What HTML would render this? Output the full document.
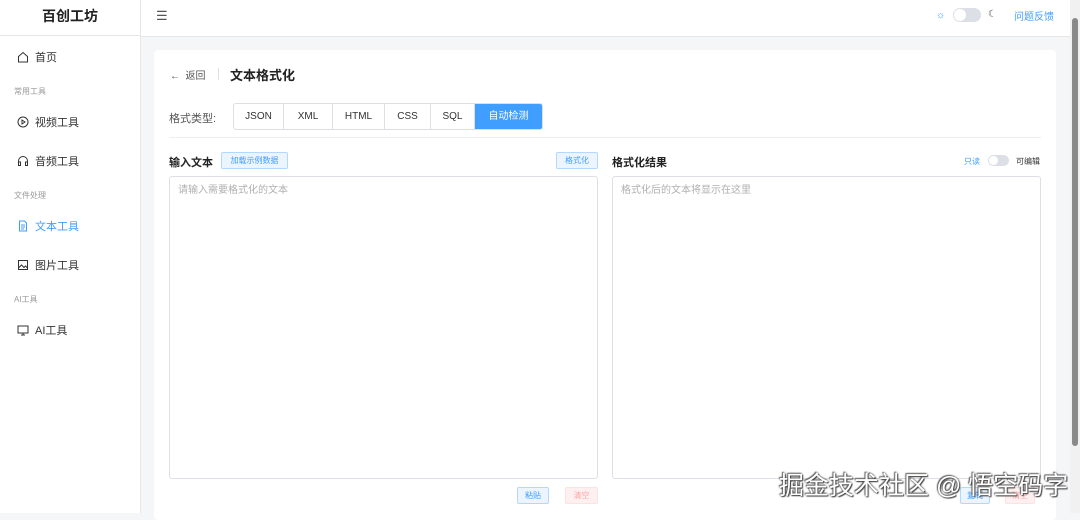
<!DOCTYPE html>
<html><head><meta charset="utf-8"><style>
*{box-sizing:border-box;margin:0;padding:0}
body{width:1080px;height:513px;overflow:hidden;font-family:"Liberation Sans","Noto Sans CJK SC",sans-serif;background:#f5f6f8;position:relative;color:#333}
.side{position:absolute;left:0;top:0;width:141px;height:513px;background:#fff;border-right:1px solid #e6e6e6}
.logo{height:36px;line-height:32px;text-align:center;font-size:14px;font-weight:bold;color:#222;border-bottom:1px solid #e6e6e6}
.mi{position:absolute;left:17px;font-size:11px;color:#333;display:flex;align-items:center;gap:6px}
.grp{position:absolute;left:14px;font-size:8px;color:#999}
.hdr{position:absolute;left:141px;top:0;right:10px;height:37px;background:#fff;border-bottom:1px solid #e6e6e6}
.card{position:absolute;left:154px;top:50px;width:902px;height:470px;background:#fff;border-radius:4px}
.abs{position:absolute}
.seg{position:absolute;left:233px;top:103px;height:27px;display:flex;border:1px solid #dcdfe6;border-radius:3px;overflow:hidden;background:#fff}
.seg div{font-size:10px;color:#333;line-height:25px;text-align:center;border-right:1px solid #dcdfe6}
.seg .on{background:#409eff;color:#fff;border:none}
.ta{position:absolute;top:176px;height:303px;border:1px solid #dcdfe6;border-radius:3px;font-size:10px;color:#b0b0b0;padding:4px 8px}
.btn{position:absolute;font-size:8px;border-radius:2px;text-align:center;line-height:15px;height:17px}
.b{background:#ecf5ff;border:1px solid #b3d8ff;color:#409eff}
.r{background:#fef0f0;border:1px solid #fde2e2;color:#f9a7a7}
.sw{position:absolute;border-radius:10px;background:#dcdfe6}
.sw i{position:absolute;left:1px;top:1px;border-radius:50%;background:#fff}
</style></head><body>
<div class="side">
<div class="logo">百创工坊</div>
<div class="mi" style="top:49px"><svg width="12" height="12" viewBox="0 0 12 12"><path d="M1.5 5.5L6 1.5l4.5 4V11h-9z" fill="none" stroke="#333" stroke-width="1"/></svg>首页</div>
<div class="grp" style="top:86px">常用工具</div>
<div class="mi" style="top:114px"><svg width="12" height="12" viewBox="0 0 12 12"><circle cx="6" cy="6" r="5" fill="none" stroke="#333"/><path d="M5 4v4l3-2z" fill="none" stroke="#333"/></svg>视频工具</div>
<div class="mi" style="top:153px"><svg width="12" height="12" viewBox="0 0 12 12"><path d="M1.5 9V6a4.5 4.5 0 019 0v3" fill="none" stroke="#333"/><rect x="1.5" y="7" width="2" height="3.5" fill="none" stroke="#333"/><rect x="8.5" y="7" width="2" height="3.5" fill="none" stroke="#333"/></svg>音频工具</div>
<div class="grp" style="top:190px">文件处理</div>
<div class="mi" style="top:218px;color:#409eff"><svg width="12" height="12" viewBox="0 0 12 12"><path d="M2.5 1h5l2 2v8h-7z M4 5h4M4 7h4M4 9h3" fill="none" stroke="#409eff"/></svg>文本工具</div>
<div class="mi" style="top:257px"><svg width="12" height="12" viewBox="0 0 12 12"><rect x="1.5" y="1.5" width="9" height="9" fill="none" stroke="#333"/><path d="M1.5 9l3-3 2.5 2.5 1.5-1.5 2 2" fill="none" stroke="#333"/></svg>图片工具</div>
<div class="grp" style="top:294px">AI工具</div>
<div class="mi" style="top:322px"><svg width="12" height="12" viewBox="0 0 12 12"><rect x="1" y="2" width="10" height="7" fill="none" stroke="#333"/><path d="M4 11h4M6 9v2" stroke="#333"/></svg>AI工具</div>
</div>
<div class="hdr">
<div class="abs" style="left:15px;top:8px;font-size:13px;color:#555">☰</div>
<div class="abs" style="left:795px;top:10px;font-size:10px;color:#409eff">☼</div>
<div class="sw" style="left:812px;top:8px;width:28px;height:14px"><i style="width:12px;height:12px"></i></div>
<div class="abs" style="left:847px;top:9px;font-size:10px;color:#555">☾</div>
<div class="abs" style="left:873px;top:8px;font-size:10px;color:#409eff">问题反馈</div>
</div>
<div class="abs" style="left:1070px;top:0;width:10px;height:513px;background:#f1f1f1"></div>
<div class="abs" style="left:1072px;top:18px;width:6px;height:428px;background:#8a8a8a;border-radius:3px"></div>
<div class="card"></div>
<div class="abs" style="left:170px;top:67px;font-size:10px;color:#555">←&nbsp; 返回</div>
<div class="abs" style="left:218px;top:68px;width:1px;height:12px;background:#e0e0e0"></div>
<div class="abs" style="left:230px;top:65px;font-size:13px;font-weight:bold;color:#222">文本格式化</div>
<div class="abs" style="left:169px;top:110px;font-size:11px;color:#555">格式类型:</div>
<div class="seg"><div style="width:50px">JSON</div><div style="width:49px">XML</div><div style="width:52px">HTML</div><div style="width:46px">CSS</div><div style="width:44px">SQL</div><div class="on" style="width:67px">自动检测</div></div>
<div class="abs" style="left:169px;top:137px;width:872px;height:1px;background:#ebeef5"></div>
<div class="abs" style="left:169px;top:154px;font-size:11px;font-weight:bold;color:#222">输入文本</div>
<div class="btn b" style="left:221px;top:152px;width:67px">加载示例数据</div>
<div class="btn b" style="left:556px;top:152px;width:42px">格式化</div>
<div class="abs" style="left:612px;top:154px;font-size:11px;font-weight:bold;color:#222">格式化结果</div>
<div class="abs" style="left:964px;top:156px;font-size:8px;color:#409eff">只读</div>
<div class="sw" style="left:988px;top:155px;width:21px;height:11px"><i style="width:9px;height:9px"></i></div>
<div class="abs" style="left:1016px;top:156px;font-size:8px;color:#333">可编辑</div>
<div class="ta" style="left:169px;width:429px">请输入需要格式化的文本</div>
<div class="ta" style="left:612px;width:429px">格式化后的文本将显示在这里</div>
<div class="btn b" style="left:517px;top:487px;width:32px">粘贴</div>
<div class="btn r" style="left:565px;top:487px;width:33px">清空</div>
<div class="btn b" style="left:960px;top:487px;width:30px">复制</div>
<div class="btn r" style="left:1005px;top:487px;width:30px">清空</div>
<div class="abs" style="left:779px;top:466px;font-size:25px;color:#fff;text-shadow:1px 1px 1px #444,-1px -1px 1px #666,0 0 2px #333;white-space:nowrap">掘金技术社区 @ 悟空码字</div>
</body></html>
